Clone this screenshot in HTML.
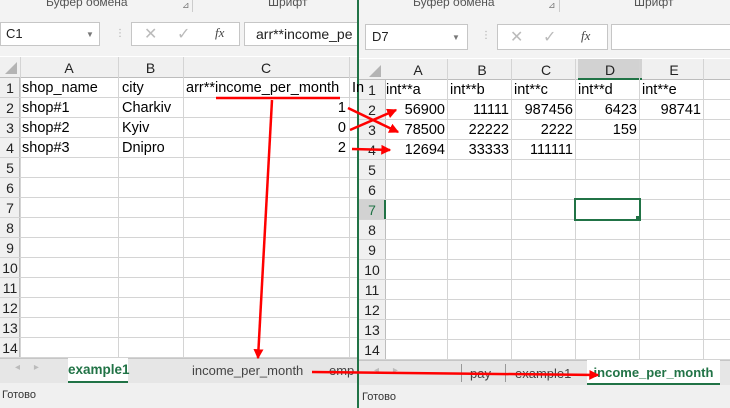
<!DOCTYPE html><html><head><meta charset="utf-8"><style>
*{margin:0;padding:0;box-sizing:border-box}
body{width:730px;height:408px;overflow:hidden;background:#fff;font-family:"Liberation Sans","DejaVu Sans",sans-serif;position:relative}
.a{position:absolute}
.t{font-size:14.5px;color:#000;white-space:nowrap;line-height:20px}
.h{font-size:14px;color:#222;text-align:center;line-height:20px}
</style></head><body>
<!-- LEFT WINDOW -->
<div class="a" style="left:0;top:0;width:357px;height:408px;background:#fff;overflow:hidden">
 <div class="a" style="left:0;top:0;width:357px;height:56px;background:#f3f3f3"></div>
 <div class="a" style="left:46px;top:-5px;font-size:12px;color:#555">Буфер обмена</div>
 <div class="a" style="left:182px;top:0;font-size:9px;color:#777">⊿</div>
 <div class="a" style="left:192px;top:0;width:1px;height:12px;background:#ccc"></div>
 <div class="a" style="left:268px;top:-5px;font-size:12px;color:#555">Шрифт</div>
 <div class="a" style="left:0;top:22px;width:100px;height:24px;background:#fff;border:1px solid #c6c6c6"></div>
 <div class="a" style="left:6px;top:26px;font-size:13px;color:#222">C1</div>
 <div class="a" style="left:86px;top:30px;font-size:8px;color:#777">▼</div>
 <div class="a" style="left:115px;top:28px;font-size:10px;color:#aaa">⋮</div>
 <div class="a" style="left:131px;top:22px;width:109px;height:24px;background:#fff;border:1px solid #c6c6c6"></div>
 <div class="a" style="left:144px;top:24px;font-size:16px;color:#bbb">✕</div>
 <div class="a" style="left:177px;top:24px;font-size:16px;color:#bbb">✓</div>
 <div class="a" style="left:215px;top:25px;font-size:13px;color:#444;font-family:'Liberation Serif',serif;font-style:italic">fx</div>
 <div class="a" style="left:244px;top:22px;width:120px;height:24px;background:#fff;border:1px solid #c6c6c6"></div>
 <div class="a" style="left:256px;top:26px;font-size:14px;color:#222">arr**income_pe</div>
 <div class="a" style="left:0;top:57px;width:357px;height:21px;background:#f0f0f0;border-bottom:1px solid #bdbdbd"></div>
 <div class="a" style="left:5px;top:62px;width:0;height:0;border-left:12px solid transparent;border-bottom:12px solid #b4b4b4"></div>
 <div class="a h" style="left:20px;top:58px;width:98px">A</div>
 <div class="a h" style="left:118px;top:58px;width:65px">B</div>
 <div class="a h" style="left:183px;top:58px;width:166px">C</div>
 <div class="a" style="left:0;top:78px;width:20px;height:280px;background:#f0f0f0;border-right:1px solid #bdbdbd"></div>
</div>
<!-- RIGHT WINDOW -->
<div class="a" style="left:357px;top:0;width:373px;height:408px;background:#fff;border-left:2px solid #217346;overflow:hidden">
 <div class="a" style="left:0;top:0;width:373px;height:58px;background:#f3f3f3"></div>
 <div class="a" style="left:54px;top:-5px;font-size:12px;color:#555">Буфер обмена</div>
 <div class="a" style="left:189px;top:0;font-size:9px;color:#777">⊿</div>
 <div class="a" style="left:200px;top:0;width:1px;height:12px;background:#ccc"></div>
 <div class="a" style="left:275px;top:-5px;font-size:12px;color:#555">Шрифт</div>
 <div class="a" style="left:6px;top:24px;width:103px;height:26px;background:#fff;border:1px solid #c6c6c6"></div>
 <div class="a" style="left:13px;top:29px;font-size:13px;color:#222">D7</div>
 <div class="a" style="left:93px;top:33px;font-size:8px;color:#777">▼</div>
 <div class="a" style="left:122px;top:30px;font-size:10px;color:#aaa">⋮</div>
 <div class="a" style="left:138px;top:24px;width:111px;height:26px;background:#fff;border:1px solid #c6c6c6"></div>
 <div class="a" style="left:151px;top:27px;font-size:16px;color:#bbb">✕</div>
 <div class="a" style="left:184px;top:27px;font-size:16px;color:#bbb">✓</div>
 <div class="a" style="left:222px;top:28px;font-size:13px;color:#444;font-family:'Liberation Serif',serif;font-style:italic">fx</div>
 <div class="a" style="left:252px;top:24px;width:130px;height:26px;background:#fff;border:1px solid #c6c6c6"></div>
 <div class="a" style="left:0;top:59px;width:373px;height:21px;background:#f0f0f0;border-bottom:1px solid #bdbdbd"></div>
 <div class="a" style="left:219px;top:59px;width:64px;height:21px;background:#d2d2d2;border-bottom:2px solid #217346"></div>
 <div class="a" style="left:10px;top:65px;width:0;height:0;border-left:12px solid transparent;border-bottom:12px solid #b4b4b4"></div>
 <div class="a h" style="left:27px;top:60px;width:64px">A</div>
 <div class="a h" style="left:91px;top:60px;width:64px">B</div>
 <div class="a h" style="left:155px;top:60px;width:64px">C</div>
 <div class="a h" style="left:219px;top:60px;width:64px">D</div>
 <div class="a h" style="left:283px;top:60px;width:64px">E</div>
 <div class="a" style="left:0;top:80px;width:27px;height:280px;background:#f0f0f0;border-right:1px solid #bdbdbd"></div>
 <div class="a" style="left:0;top:200px;width:27px;height:20px;background:#d2d2d2;border-right:2px solid #217346"></div>
</div>
<svg class="a" style="left:0;top:0" width="730" height="408">
<g stroke="#d4d4d4" stroke-width="1">
<line x1="20.5" y1="57" x2="20.5" y2="358"/>
<line x1="118.5" y1="57" x2="118.5" y2="358"/>
<line x1="183.5" y1="57" x2="183.5" y2="358"/>
<line x1="349.5" y1="57" x2="349.5" y2="358"/>
<line x1="447.5" y1="59" x2="447.5" y2="360"/>
<line x1="511.5" y1="59" x2="511.5" y2="360"/>
<line x1="575.5" y1="59" x2="575.5" y2="360"/>
<line x1="639.5" y1="59" x2="639.5" y2="360"/>
<line x1="703.5" y1="59" x2="703.5" y2="360"/>
</g>
<g stroke="#d4d4d4" id="lg"></g>
<rect x="575" y="199" width="65" height="21" fill="none" stroke="#217346" stroke-width="2"/>
<rect x="636" y="216" width="5" height="5" fill="#217346"/>
</svg>
<div id="cells"></div>
<script>
var s='',svg=document.getElementById('lg');
var ns='http://www.w3.org/2000/svg';
for(var r=1;r<=14;r++){
 var y=78+(r-1)*20;
 s+='<div class="a h" style="left:0;top:'+y+'px;width:20px">'+r+'</div>';
 var l=document.createElementNS(ns,'line');l.setAttribute('x1',0);l.setAttribute('x2',357);l.setAttribute('y1',y+19.5);l.setAttribute('y2',y+19.5);svg.appendChild(l);
 var y2=80+(r-1)*20;
 s+='<div class="a h" style="left:359px;top:'+y2+'px;width:26px;'+(r==7?'color:#217346':'')+'">'+r+'</div>';
 l=document.createElementNS(ns,'line');l.setAttribute('x1',359);l.setAttribute('x2',730);l.setAttribute('y1',y2+19.5);l.setAttribute('y2',y2+19.5);svg.appendChild(l);
}
function L(x,r,t){s+='<div class="a t" style="left:'+x+'px;top:'+(78+(r-1)*20)+'px">'+t+'</div>';}
function R(x,r,t){s+='<div class="a t" style="left:'+(x-200)+'px;width:200px;text-align:right;top:'+(78+(r-1)*20)+'px">'+t+'</div>';}
L(22,1,'shop_name');L(122,1,'city');L(186,1,'arr**income_per_month');L(352,1,'In');
L(22,2,'shop#1');L(122,2,'Charkiv');R(346,2,'1');
L(22,3,'shop#2');L(122,3,'Kyiv');R(346,3,'0');
L(22,4,'shop#3');L(122,4,'Dnipro');R(346,4,'2');
function Q(x,r,t){s+='<div class="a t" style="left:'+x+'px;top:'+(80+(r-1)*20)+'px">'+t+'</div>';}
function P(x,r,t){s+='<div class="a t" style="left:'+(x-200)+'px;width:200px;text-align:right;top:'+(80+(r-1)*20)+'px">'+t+'</div>';}
Q(386,1,'int**a');Q(450,1,'int**b');Q(514,1,'int**c');Q(578,1,'int**d');Q(642,1,'int**e');
P(445,2,'56900');P(509,2,'11111');P(573,2,'987456');P(637,2,'6423');P(701,2,'98741');
P(445,3,'78500');P(509,3,'22222');P(573,3,'2222');P(637,3,'159');
P(445,4,'12694');P(509,4,'33333');P(573,4,'111111');
document.getElementById('cells').innerHTML=s;
</script>
<div class="a" style="left:0;top:358px;width:357px;height:25px;background:#e6e6e6;border-top:1px solid #c6c6c6"></div>
<div class="a" style="left:15px;top:362px;font-size:10px;color:#bbb">◂&nbsp;&nbsp;&nbsp;&nbsp;&nbsp;▸</div>
<div class="a" style="left:68px;top:358px;width:60px;height:25px;background:#fff;border-bottom:2px solid #217346;color:#217346;font-weight:bold;font-size:13.5px;text-align:center;line-height:24px">example1</div>
<div class="a" style="left:192px;top:363px;font-size:13px;color:#444">income_per_month</div>
<div class="a" style="left:329px;top:363px;font-size:13px;color:#444">emp</div>
<div class="a" style="left:0;top:383px;width:357px;height:25px;background:#f0f0f0"></div>
<div class="a" style="left:2px;top:389px;font-size:11px;color:#333">Готово</div>
<div class="a" style="left:359px;top:360px;width:371px;height:25px;background:#e6e6e6;border-top:1px solid #c6c6c6"></div>
<div class="a" style="left:374px;top:365px;font-size:10px;color:#bbb">◂&nbsp;&nbsp;&nbsp;&nbsp;&nbsp;▸</div>
<div class="a" style="left:461px;top:364px;width:1px;height:18px;background:#999"></div>
<div class="a" style="left:470px;top:366px;font-size:13px;color:#444">pay</div>
<div class="a" style="left:505px;top:364px;width:1px;height:18px;background:#999"></div>
<div class="a" style="left:515px;top:366px;font-size:13px;color:#444">example1</div>
<div class="a" style="left:587px;top:360px;width:133px;height:25px;background:#fff;border-bottom:2px solid #217346;color:#217346;font-weight:bold;font-size:13px;text-align:center;line-height:26px">income_per_month</div>
<div class="a" style="left:359px;top:385px;width:371px;height:23px;background:#f0f0f0"></div>
<div class="a" style="left:362px;top:391px;font-size:11px;color:#333">Готово</div>
<svg class="a" style="left:0;top:0" width="730" height="408">
<defs><marker id="m" markerWidth="4" markerHeight="4" refX="3.5" refY="2" orient="auto" markerUnits="strokeWidth"><path d="M0,0 L4,2 L0,4z" fill="#f00"/></marker></defs>
<g stroke="#f00" stroke-width="2.5" fill="none">
<line x1="216" y1="98" x2="340" y2="98"/>
<line x1="272" y1="100" x2="258" y2="358" marker-end="url(#m)"/>
<line x1="348" y1="108" x2="398" y2="132" marker-end="url(#m)"/>
<line x1="350" y1="130" x2="396" y2="110" marker-end="url(#m)"/>
<line x1="352" y1="149" x2="390" y2="150" marker-end="url(#m)"/>
<line x1="312" y1="372" x2="598" y2="375" marker-end="url(#m)"/>
</g></svg>
</body></html>
